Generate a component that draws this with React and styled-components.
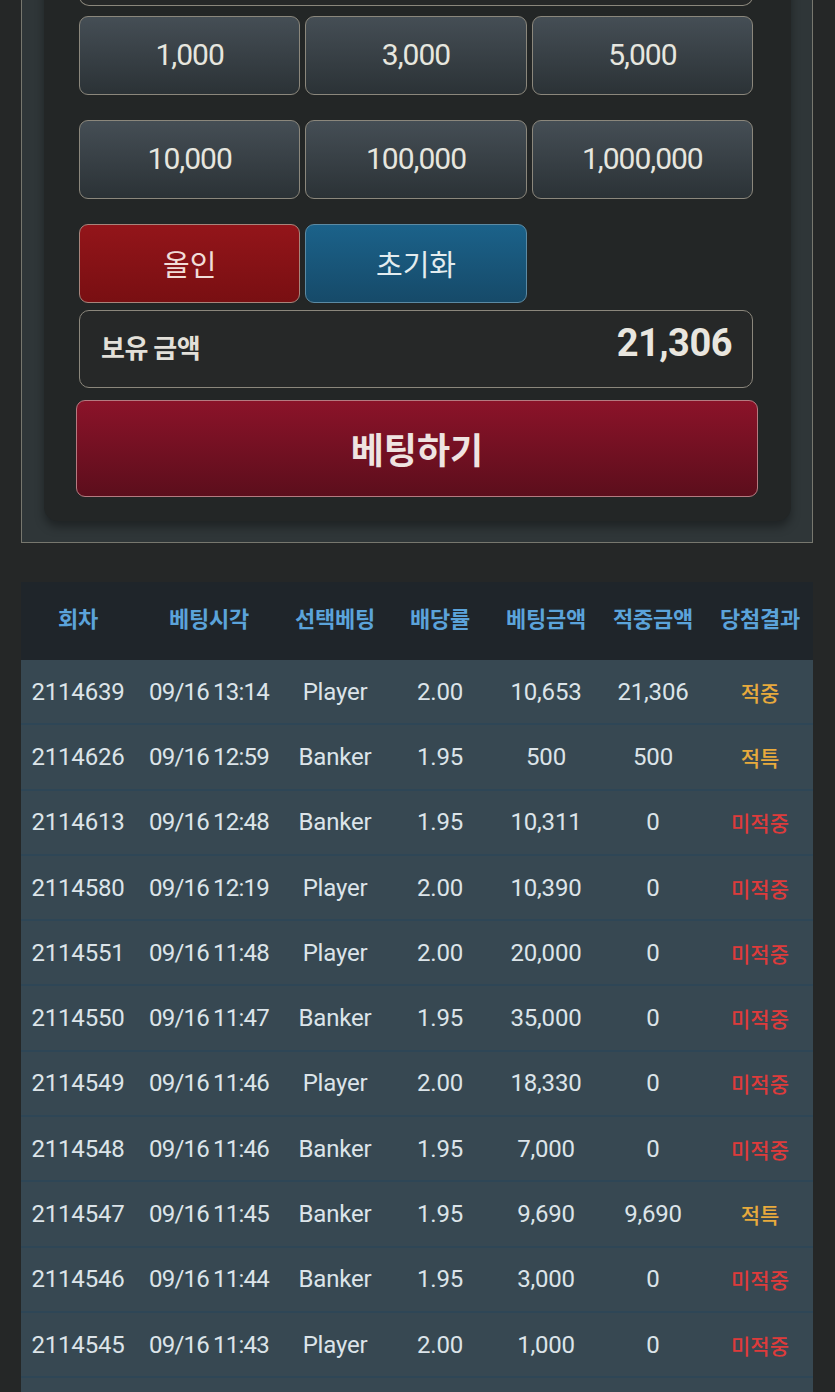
import React from "react";
import styled, { createGlobalStyle } from "styled-components";

const Global = createGlobalStyle`
  html, body { margin: 0; padding: 0; background: #252727; }
  body { font-family: Roboto, "Noto Sans CJK KR", sans-serif; overflow: hidden; }
  * { box-sizing: border-box; }
`;

const Page = styled.div`
  width: 835px;
  height: 1392px;
  overflow: hidden;
  background: #252727;
  padding: 0 22px 0 21px;
`;

const OuterPanel = styled.div`
  margin-top: -80px;
  border: 1px solid #77776e;
  background: #2f3638;
  padding: 0 21px 21px 22px;
`;

const InnerPanel = styled.div`
  background: #232626;
  border-radius: 0 0 14px 14px;
  box-shadow: 0 6px 10px rgba(0, 0, 0, 0.35);
  padding: 0 38px 24px 35px;
  display: flex;
  flex-direction: column;
`;

const InputBox = styled.div`
  height: 85px;
  border: 1.5px solid #8b877c;
  border-top: none;
  border-radius: 0 0 10px 10px;
  background: #262828;
`;

const ChipGrid = styled.div`
  margin-top: 10px;
  display: grid;
  grid-template-columns: repeat(3, 1fr);
  grid-auto-rows: 79px;
  column-gap: 5px;
  row-gap: 25px;
`;

const variants = {
  chip: { top: "#454e55", bottom: "#2b3236", border: "#8b877c", color: "#e6e6df" },
  red: { top: "#93151a", bottom: "#790f12", border: "#a8847b", color: "#f1ddd8" },
  blue: { top: "#1b628a", bottom: "#164a69", border: "#5c8aa3", color: "#e3ecef" },
};

const Chip = styled.button`
  border: 1.5px solid ${(p) => variants[p.$v].border};
  border-radius: 9px;
  background: linear-gradient(to bottom, ${(p) => variants[p.$v].top}, ${(p) => variants[p.$v].bottom});
  color: ${(p) => variants[p.$v].color};
  font-family: Roboto, "Noto Sans CJK KR", sans-serif;
  font-size: ${(p) => (p.$v === "chip" ? "30px" : "29px")};
  letter-spacing: ${(p) => (p.$v === "chip" ? "-1px" : "0")};
  font-weight: 400;
  display: flex;
  align-items: center;
  justify-content: center;
  padding: 0 0 2px;
`;

const Balance = styled.div`
  margin-top: 7px;
  height: 78px;
  border: 1.5px solid #8b877c;
  border-radius: 10px;
  background: #262828;
  display: flex;
  align-items: center;
  justify-content: space-between;
  padding: 0 20px 12px 21px;
`;

const BalanceLabel = styled.span`
  font-family: "Noto Sans CJK KR", sans-serif;
  font-weight: 700;
  font-size: 26px;
  color: #e3e0d9;
  margin-top: 6px;
  letter-spacing: -0.5px;
`;

const BalanceValue = styled.span`
  font-family: Roboto, sans-serif;
  font-weight: 700;
  font-size: 38px;
  color: #e9e6df;
  letter-spacing: -0.5px;
`;

const BetButton = styled.button`
  margin: 12px -5px 0 -3px;
  height: 97px;
  border: 1px solid #b57a80;
  border-radius: 9px;
  background: linear-gradient(to bottom, #8b1329, #5c0e1c);
  color: #efe4e1;
  font-family: "Noto Sans CJK KR", sans-serif;
  font-weight: 700;
  font-size: 36px;
  display: flex;
  align-items: center;
  justify-content: center;
  padding-bottom: 2px;
`;

const Table = styled.div`
  margin-top: 39px;
  width: 792px;
`;

const cols = "114px 148px 104px 106px 106px 108px 106px";

const HeadRow = styled.div`
  display: grid;
  grid-template-columns: ${cols};
  height: 78px;
  align-items: center;
  background: #1f252a;
`;

const HeadCell = styled.div`
  text-align: center;
  font-family: "Noto Sans CJK KR", sans-serif;
  font-weight: 700;
  font-size: 22px;
  color: #5ba3da;
  letter-spacing: -0.3px;
  padding-bottom: 8px;
`;

const Row = styled.div`
  display: grid;
  grid-template-columns: ${cols};
  height: 65.3px;
  align-items: center;
  background: #374852;
  border-bottom: 2px solid #2e4656;
`;

const Cell = styled.div`
  text-align: center;
  font-family: Roboto, "Noto Sans CJK KR", sans-serif;
  font-size: 24px;
  color: #dce4e9;
  letter-spacing: ${(p) => (p.$tight ? "-0.8px" : "-0.2px")};
  word-spacing: ${(p) => (p.$tight ? "-1px" : "0")};
  white-space: nowrap;
`;

const Result = styled.div`
  text-align: center;
  font-family: "Noto Sans CJK KR", sans-serif;
  font-size: 21px;
  font-weight: 500;
  color: ${(p) => (p.$win ? "#e8aa3c" : "#dd3b3b")};
`;

const rows = [
  ["2114639", "09/16 13:14", "Player", "2.00", "10,653", "21,306", "적중"],
  ["2114626", "09/16 12:59", "Banker", "1.95", "500", "500", "적특"],
  ["2114613", "09/16 12:48", "Banker", "1.95", "10,311", "0", "미적중"],
  ["2114580", "09/16 12:19", "Player", "2.00", "10,390", "0", "미적중"],
  ["2114551", "09/16 11:48", "Player", "2.00", "20,000", "0", "미적중"],
  ["2114550", "09/16 11:47", "Banker", "1.95", "35,000", "0", "미적중"],
  ["2114549", "09/16 11:46", "Player", "2.00", "18,330", "0", "미적중"],
  ["2114548", "09/16 11:46", "Banker", "1.95", "7,000", "0", "미적중"],
  ["2114547", "09/16 11:45", "Banker", "1.95", "9,690", "9,690", "적특"],
  ["2114546", "09/16 11:44", "Banker", "1.95", "3,000", "0", "미적중"],
  ["2114545", "09/16 11:43", "Player", "2.00", "1,000", "0", "미적중"],
];

const headers = ["회차", "베팅시각", "선택베팅", "배당률", "베팅금액", "적중금액", "당첨결과"];

export default function App() {
  return (
    <>
      <Global />
      <Page>
        <OuterPanel>
          <InnerPanel>
            <InputBox />
            <ChipGrid>
              {["1,000", "3,000", "5,000", "10,000", "100,000", "1,000,000"].map((c) => (
                <Chip key={c} $v="chip">{c}</Chip>
              ))}
              <Chip $v="red">올인</Chip>
              <Chip $v="blue">초기화</Chip>
            </ChipGrid>
            <Balance>
              <BalanceLabel>보유 금액</BalanceLabel>
              <BalanceValue>21,306</BalanceValue>
            </Balance>
            <BetButton>베팅하기</BetButton>
          </InnerPanel>
        </OuterPanel>
        <Table>
          <HeadRow>
            {headers.map((h) => (
              <HeadCell key={h}>{h}</HeadCell>
            ))}
          </HeadRow>
          {rows.map((r, i) => (
            <Row key={i}>
              <Cell>{r[0]}</Cell>
              <Cell $tight>{r[1]}</Cell>
              <Cell>{r[2]}</Cell>
              <Cell>{r[3]}</Cell>
              <Cell>{r[4]}</Cell>
              <Cell>{r[5]}</Cell>
              <Result $win={r[6] !== "미적중"}>{r[6]}</Result>
            </Row>
          ))}
          <Row />
        </Table>
      </Page>
    </>
  );
}
